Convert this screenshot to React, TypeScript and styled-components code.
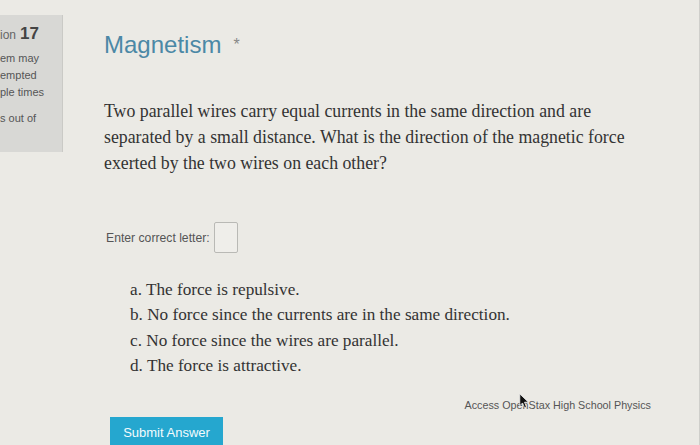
import React from 'react'
import styled, { createGlobalStyle } from 'styled-components'

const GlobalStyle = createGlobalStyle`
  html, body {
    margin: 0;
    padding: 0;
    background: #ebeae5;
    width: 700px;
    height: 445px;
    overflow: hidden;
  }
`

const Page = styled.div`
  display: flex;
  flex-direction: row;
  align-items: flex-start;
  width: 700px;
  height: 445px;
  background: #ebeae5;
  border-right: 1px solid #cfcfcb;
  box-sizing: border-box;
  font-family: 'Liberation Sans', Arial, sans-serif;
  overflow: hidden;
`

const Sidebar = styled.div`
  width: 63px;
  height: 137px;
  margin-top: 15px;
  flex-shrink: 0;
  background: #d8d8d5;
  border-right: 1px solid #cacac6;
  box-sizing: border-box;
  padding-top: 10px;
  color: #555;
  overflow: hidden;
`

const QNum = styled.div`
  font-size: 12px;
  line-height: 18px;
  color: #666;
  white-space: nowrap;

  b {
    font-size: 17px;
    color: #444;
    font-weight: 700;
    margin-left: 4px;
  }
`

const SideText = styled.div<{ gap?: number }>`
  font-size: 11px;
  line-height: 17px;
  margin-top: ${(p) => p.gap ?? 0}px;
  white-space: nowrap;
  color: #555;
`

const Main = styled.div`
  flex: 1;
  display: flex;
  flex-direction: column;
  padding-left: 41px;
  padding-top: 30px;
`

const Title = styled.h1`
  margin: 0;
  font-size: 24px;
  line-height: 30px;
  font-weight: 400;
  color: #4b88a6;

  span {
    color: #888;
    font-size: 16px;
    vertical-align: top;
    margin-left: 12px;
  }
`

const Question = styled.p`
  margin: 38px 0 0 0;
  font-family: 'Liberation Serif', 'Times New Roman', serif;
  font-size: 17.8px;
  line-height: 26px;
  color: #333;
  white-space: nowrap;
`

const EntryRow = styled.div`
  display: flex;
  align-items: center;
  gap: 4px;
  margin-top: 46px;
  padding-left: 2px;
  font-size: 12.2px;
  color: #555;
`

const LetterBox = styled.div`
  width: 22px;
  height: 29px;
  border: 1px solid #b9b9b5;
  border-radius: 2px;
  background: #efeeea;
`

const Options = styled.ol`
  list-style: none;
  margin: 24px 0 0 0;
  padding-left: 26px;
  font-family: 'Liberation Serif', 'Times New Roman', serif;
  font-size: 17.2px;
  line-height: 25.3px;
  color: #333;
`

const Access = styled.div`
  align-self: flex-end;
  margin-top: 21px;
  margin-right: 48px;
  font-size: 10.75px;
  color: #555;
  position: relative;
`

const Cursor = styled.svg`
  position: absolute;
  left: 54px;
  top: -6px;
`

const SubmitButton = styled.button`
  align-self: flex-start;
  margin-top: 6px;
  margin-left: 6px;
  width: 113px;
  height: 30px;
  border: none;
  border-radius: 0;
  background: #25a7cf;
  color: #f4fbfd;
  font-family: 'Liberation Sans', Arial, sans-serif;
  font-size: 13px;
  padding: 0;
`

const options = [
  'a. The force is repulsive.',
  'b. No force since the currents are in the same direction.',
  'c. No force since the wires are parallel.',
  'd. The force is attractive.',
]

export default function App() {
  return (
    <Page>
      <GlobalStyle />
      <Sidebar>
        <QNum>
          ion<b>17</b>
        </QNum>
        <SideText gap={6}>em may</SideText>
        <SideText>empted</SideText>
        <SideText>ple times</SideText>
        <SideText gap={9}>s out of</SideText>
      </Sidebar>
      <Main>
        <Title>
          Magnetism<span>*</span>
        </Title>
        <Question>
          Two parallel wires carry equal currents in the same direction and are
          <br />
          separated by a small distance. What is the direction of the magnetic force
          <br />
          exerted by the two wires on each other?
        </Question>
        <EntryRow>
          Enter correct letter:
          <LetterBox />
        </EntryRow>
        <Options>
          {options.map((o) => (
            <li key={o}>{o}</li>
          ))}
        </Options>
        <Access>
          Access OpenStax High School Physics
          <Cursor width="11" height="16" viewBox="0 0 14 20">
            <path d="M1 1 L1 16 L4.5 12.5 L7 18.5 L9.5 17.5 L7 11.5 L12 11.5 Z" fill="#111" stroke="#eee" strokeWidth="1" />
          </Cursor>
        </Access>
        <SubmitButton>Submit Answer</SubmitButton>
      </Main>
    </Page>
  )
}
